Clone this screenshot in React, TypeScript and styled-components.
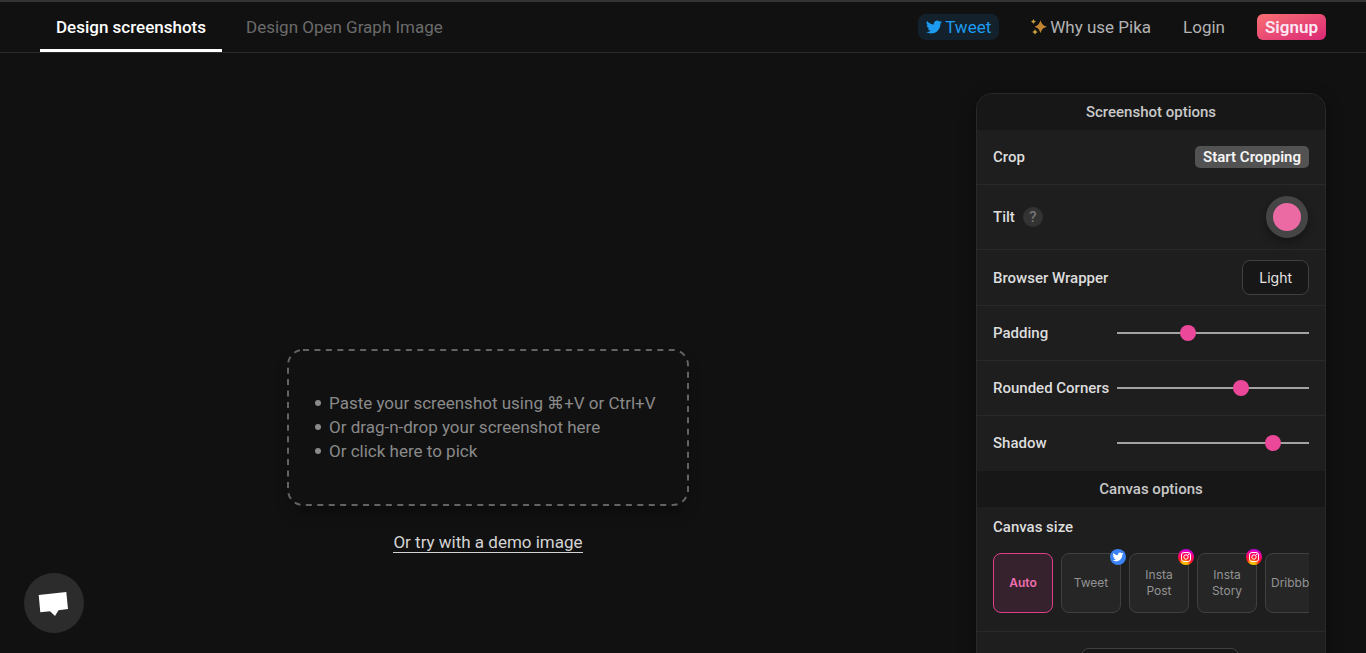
import React, { useState } from "react";
import styled, { createGlobalStyle } from "styled-components";

const GlobalStyle = createGlobalStyle`
  *, *::before, *::after { box-sizing: border-box; }
  html { background: #111111; }
  body {
    margin: 0;
    background: #111111;
    color: #e5e5e5;
    font-family: Roboto, "Noto Sans", sans-serif;
    font-size: 17px;
    line-height: 24px;
  }
  button, input { font-family: inherit; margin: 0; }
  button { cursor: pointer; }
  a { text-decoration: none; color: inherit; }
`;

const Page = styled.div`
  height: 100vh;
  overflow: hidden;
`;

const Header = styled.header`
  display: flex;
  justify-content: space-between;
  height: 53px;
  padding: 0 40px;
  border-top: 2px solid #333333;
  border-bottom: 1px solid #2b2b2b;
`;

const Tabs = styled.nav`
  display: flex;
  gap: 8px;
`;

const Tab = styled.a<{ $active?: boolean }>`
  display: flex;
  align-items: center;
  padding: 3px 16px 0;
  border-bottom: 3px solid ${(p) => (p.$active ? "#ffffff" : "transparent")};
  color: ${(p) => (p.$active ? "#ffffff" : "#6b6b6b")};
  font-weight: ${(p) => (p.$active ? 500 : 400)};
`;

const Actions = styled.nav`
  display: flex;
  align-items: center;
  gap: 32px;
`;

const NavLink = styled.a`
  display: flex;
  align-items: center;
  gap: 3px;
  color: #b3b3b3;
`;

const TweetLink = styled(NavLink)`
  height: 26px;
  padding: 0 8px;
  border-radius: 8px;
  background: #12212b;
  color: #1d9bf0;
`;

const SignupLink = styled(NavLink)`
  height: 26px;
  padding: 0 8px;
  border-radius: 6px;
  background: linear-gradient(to bottom right, #f87171, #db2777);
  color: #fce7f3;
  font-weight: 600;
`;

const Main = styled.main`
  display: flex;
  align-items: flex-start;
  gap: 40px;
  padding: 40px 40px 0;
`;

const Canvas = styled.section`
  flex: 1;
  display: flex;
  flex-direction: column;
  align-items: center;
  gap: 26px;
  padding-top: 256px;
`;

const DropZone = styled.button`
  position: relative;
  width: 402px;
  padding: 42px 26px 43px;
  border: 0;
  border-radius: 16px;
  background: transparent;
  box-shadow: 0 10px 15px -3px rgba(0, 0, 0, 0.3);
  color: #8a8a8a;
  font-size: 17px;
  line-height: 24px;
  text-align: left;
`;

const DashedOutline = styled.svg`
  position: absolute;
  inset: 0;
  width: 100%;
  height: 100%;
  overflow: visible;

  rect {
    x: 1px;
    y: 1px;
    width: calc(100% - 2px);
    height: calc(100% - 2px);
    fill: none;
    stroke: #636363;
    stroke-width: 2px;
  }
`;

const Hints = styled.ul`
  margin: 0;
  padding: 0 0 0 2px;
  list-style: none;
`;

const Hint = styled.li`
  display: flex;
  align-items: center;
  gap: 8px;

  &::before {
    content: "";
    width: 6px;
    height: 6px;
    border-radius: 50%;
    background: #8a8a8a;
  }
`;

const DemoLink = styled.a`
  line-height: 20px;
  border-bottom: 1px solid #d4d4d4;
  color: #d4d4d4;
`;

const Panel = styled.aside`
  flex: none;
  width: 350px;
  overflow: hidden;
  border: 1px solid #292929;
  border-radius: 16px;
  background: #1e1e1e;
  box-shadow: 0 4px 16px rgba(0, 0, 0, 0.4);
  font-size: 15px;
  line-height: 20px;
  font-weight: 500;
`;

const PanelTitle = styled.h2`
  margin: 0;
  padding: 8px 16px;
  background: #171717;
  color: #c9c9c9;
  font-size: 15px;
  line-height: 20px;
  font-weight: 500;
  text-align: center;
`;

const Row = styled.div<{ $height?: number; $last?: boolean }>`
  display: flex;
  align-items: center;
  justify-content: space-between;
  min-height: ${(p) => p.$height ?? 55}px;
  padding: 0 16px;
  border-bottom: 1px solid ${(p) => (p.$last ? "transparent" : "#292929")};
`;

const Label = styled.label`
  display: flex;
  align-items: center;
  gap: 8px;
  color: #dddddd;
`;

const Help = styled.span`
  width: 20px;
  height: 20px;
  border-radius: 50%;
  background: #333333;
  color: #777777;
  text-align: center;
  font-weight: 500;
`;

const CropButton = styled.button`
  height: 22px;
  padding: 0 8px;
  border: 0;
  border-radius: 5px;
  background: #525252;
  color: #f5f5f5;
  font-size: 15px;
  line-height: 20px;
  font-weight: 600;
`;

const TiltPad = styled.button`
  width: 42px;
  height: 42px;
  margin-right: 1px;
  padding: 0;
  border: 7px solid #454545;
  border-radius: 50%;
  background: #ec6aa4;
  box-shadow: 0 4px 8px rgba(0, 0, 0, 0.3);
`;

const WrapperButton = styled.button`
  height: 35px;
  padding: 0 16px;
  border: 1px solid #404040;
  border-radius: 8px;
  background: #171717;
  color: #e5e5e5;
  font-family: Inter, sans-serif;
  font-size: 14px;
  line-height: 20px;
`;

const Range = styled.input`
  appearance: none;
  width: 192px;
  height: 16px;
  background: linear-gradient(#a3a3a3, #a3a3a3) center / 100% 2px no-repeat;

  &::-webkit-slider-thumb {
    appearance: none;
    width: 16px;
    height: 16px;
    border-radius: 50%;
    background: #ec4899;
  }
`;

const SizeSection = styled.section`
  padding: 10px 16px 18px;
  border-bottom: 1px solid #292929;
`;

const SizeTitle = styled.h3`
  margin: 0;
  color: #dddddd;
  font-size: 15px;
  line-height: 20px;
  font-weight: 500;
`;

const SizeList = styled.div`
  display: flex;
  gap: 8px;
  overflow: hidden;
  padding-top: 16px;
`;

const SizeButton = styled.button<{ $active?: boolean }>`
  position: relative;
  flex: none;
  width: 60px;
  height: 60px;
  padding: 0 5px;
  border: 1px solid ${(p) => (p.$active ? "#db3f8c" : "#404040")};
  border-radius: 8px;
  background: ${(p) => (p.$active ? "#36222d" : "#262626")};
  color: ${(p) => (p.$active ? "#f06eb0" : "#939393")};
  font-family: Inter, sans-serif;
  font-size: 12px;
  line-height: 16px;
  font-weight: ${(p) => (p.$active ? 600 : 400)};
`;

const Badge = styled.span`
  position: absolute;
  top: -5px;
  right: -6px;
  width: 16px;
  height: 16px;
  svg { display: block; }
`;

const MoreSection = styled.section`
  display: flex;
  justify-content: center;
  padding: 16px 0 16px 18px;
`;

const MoreButton = styled.button`
  width: 158px;
  height: 36px;
  border: 1px solid #404040;
  border-radius: 8px;
  background: #171717;
  color: #e5e5e5;
`;

const ChatButton = styled.button`
  position: fixed;
  left: 24px;
  bottom: 20px;
  width: 60px;
  height: 60px;
  padding: 0;
  border: 0;
  border-radius: 50%;
  background: #2c2c2c;
  svg { display: block; }
`;

const birdPath =
  "M23.95 4.57a10 10 0 0 1-2.82.77 4.96 4.96 0 0 0 2.16-2.72c-.95.55-2 .96-3.13 1.18a4.92 4.92 0 0 0-8.38 4.48A13.93 13.93 0 0 1 1.64 3.16a4.92 4.92 0 0 0 1.52 6.57 4.9 4.9 0 0 1-2.23-.61v.06a4.92 4.92 0 0 0 3.95 4.83 5 5 0 0 1-2.21.08 4.94 4.94 0 0 0 4.6 3.42A9.87 9.87 0 0 1 0 19.54a13.99 13.99 0 0 0 7.55 2.21c9.05 0 14-7.5 14-13.98 0-.21 0-.42-.02-.63a9.94 9.94 0 0 0 2.46-2.55z";

const Bird = () => (
  <svg width="16" height="16" viewBox="0 0 24 24" fill="currentColor" aria-hidden="true">
    <path d={birdPath} />
  </svg>
);

const Sparkles = () => (
  <svg width="16" height="16" viewBox="0 0 16 16" fill="#c18431" aria-hidden="true">
    <path d="M9.500 1.200C10.900 5.300 12 6.600 16 7.700c-4 1.100-5.100 2.400-6.500 6.500C8.100 10.100 7 8.800 3.500 7.700 7 6.600 8.100 5.300 9.500 1.200z" />
    <path fill="#c9a13f" d="M2.400 0c.7 1.500 1.100 2 2.600 2.500-1.500.5-1.900 1-2.600 2.500C1.700 3.500 1.400 3 0 2.500 1.400 2 1.700 1.500 2.400 0z" />
    <path fill="#c9a13f" d="M4 10c.7 1.800 1.200 2.300 2.800 2.900C5.200 13.500 4.700 14 4 15.800c-.7-1.800-1.200-2.300-2.800-2.900C2.800 12.300 3.300 11.800 4 10z" />
  </svg>
);

const TwitterBadge = () => (
  <svg width="16" height="16" viewBox="0 0 16 16" aria-hidden="true">
    <circle cx="8" cy="8" r="8" fill="#3b82f6" />
    <path d={birdPath} fill="#ffffff" transform="translate(2.600 2.500) scale(.45)" />
  </svg>
);

const InstagramBadge = ({ id }: { id: string }) => (
  <svg width="16" height="16" viewBox="0 0 16 16" aria-hidden="true">
    <defs>
      <radialGradient id={id} cx="0.4" cy="1.05" r="1.1">
        <stop offset="0" stopColor="#ffdd00" />
        <stop offset="0.22" stopColor="#ffb000" />
        <stop offset="0.42" stopColor="#ff1b1b" />
        <stop offset="0.72" stopColor="#ff0080" />
        <stop offset="1" stopColor="#b400ff" />
      </radialGradient>
    </defs>
    <circle cx="8" cy="8" r="8" fill={`url(#${id})`} />
    <g fill="none" stroke="#ffffff" strokeWidth="1">
      <rect x="3.500" y="3.500" width="9" height="9" rx="2.500" />
      <circle cx="8" cy="8" r="2.200" />
    </g>
    <circle cx="10.600" cy="5.400" r="0.600" fill="#ffffff" />
  </svg>
);

const ChatIcon = () => (
  <svg width="60" height="60" viewBox="0 0 60 60" fill="#ffffff" aria-hidden="true">
    <path d="M14.700 22L42.300 19 44 36l-9.500 1.200L31 43l-5-4.700-9.700 1z" />
  </svg>
);

const sliders = [
  { id: "padding", label: "Padding", value: 36 },
  { id: "corners", label: "Rounded Corners", value: 66 },
  { id: "shadow", label: "Shadow", value: 84 },
];

type Size = { name: string; brand?: "twitter" | "instagram" };
const sizes: Size[] = [
  { name: "Auto" },
  { name: "Tweet", brand: "twitter" },
  { name: "Insta Post", brand: "instagram" },
  { name: "Insta Story", brand: "instagram" },
  { name: "Dribbble" },
];

export default function App() {
  const [size, setSize] = useState("Auto");
  return (
    <Page>
      <GlobalStyle />
      <Header>
        <Tabs>
          <Tab href="#screenshots" $active>Design screenshots</Tab>
          <Tab href="#open-graph">Design Open Graph Image</Tab>
        </Tabs>
        <Actions>
          <TweetLink href="#tweet"><Bird />Tweet</TweetLink>
          <NavLink href="#why"><Sparkles />Why use Pika</NavLink>
          <NavLink href="#login">Login</NavLink>
          <SignupLink href="#signup">Signup</SignupLink>
        </Actions>
      </Header>
      <Main>
        <Canvas>
          <DropZone type="button">
            <DashedOutline aria-hidden="true">
              <rect rx="15" strokeDasharray="6 5.430" />
            </DashedOutline>
            <Hints>
              <Hint>Paste your screenshot using ⌘+V or Ctrl+V</Hint>
              <Hint>Or drag-n-drop your screenshot here</Hint>
              <Hint>Or click here to pick</Hint>
            </Hints>
          </DropZone>
          <DemoLink href="#demo">Or try with a demo image</DemoLink>
        </Canvas>
        <Panel>
          <PanelTitle>Screenshot options</PanelTitle>
          <Row>
            <Label htmlFor="crop">Crop</Label>
            <CropButton id="crop" type="button">Start Cropping</CropButton>
          </Row>
          <Row $height={65}>
            <Label htmlFor="tilt">Tilt <Help>?</Help></Label>
            <TiltPad id="tilt" type="button" />
          </Row>
          <Row $height={56}>
            <Label htmlFor="wrapper">Browser Wrapper</Label>
            <WrapperButton id="wrapper" type="button">Light</WrapperButton>
          </Row>
          {sliders.map((s, i) => (
            <Row key={s.id} $last={i === sliders.length - 1}>
              <Label htmlFor={s.id}>{s.label}</Label>
              <Range id={s.id} type="range" defaultValue={s.value} />
            </Row>
          ))}
          <PanelTitle>Canvas options</PanelTitle>
          <SizeSection>
            <SizeTitle>Canvas size</SizeTitle>
            <SizeList>
              {sizes.map((s, i) => (
                <SizeButton key={s.name} type="button" $active={s.name === size} onClick={() => setSize(s.name)}>
                  {s.name}
                  {s.brand && (
                    <Badge>
                      {s.brand === "twitter" ? <TwitterBadge /> : <InstagramBadge id={`instagram-${i}`} />}
                    </Badge>
                  )}
                </SizeButton>
              ))}
            </SizeList>
          </SizeSection>
          <MoreSection>
            <MoreButton type="button" aria-label="Background" />
          </MoreSection>
        </Panel>
      </Main>
      <ChatButton type="button" aria-label="Open chat"><ChatIcon /></ChatButton>
    </Page>
  );
}
